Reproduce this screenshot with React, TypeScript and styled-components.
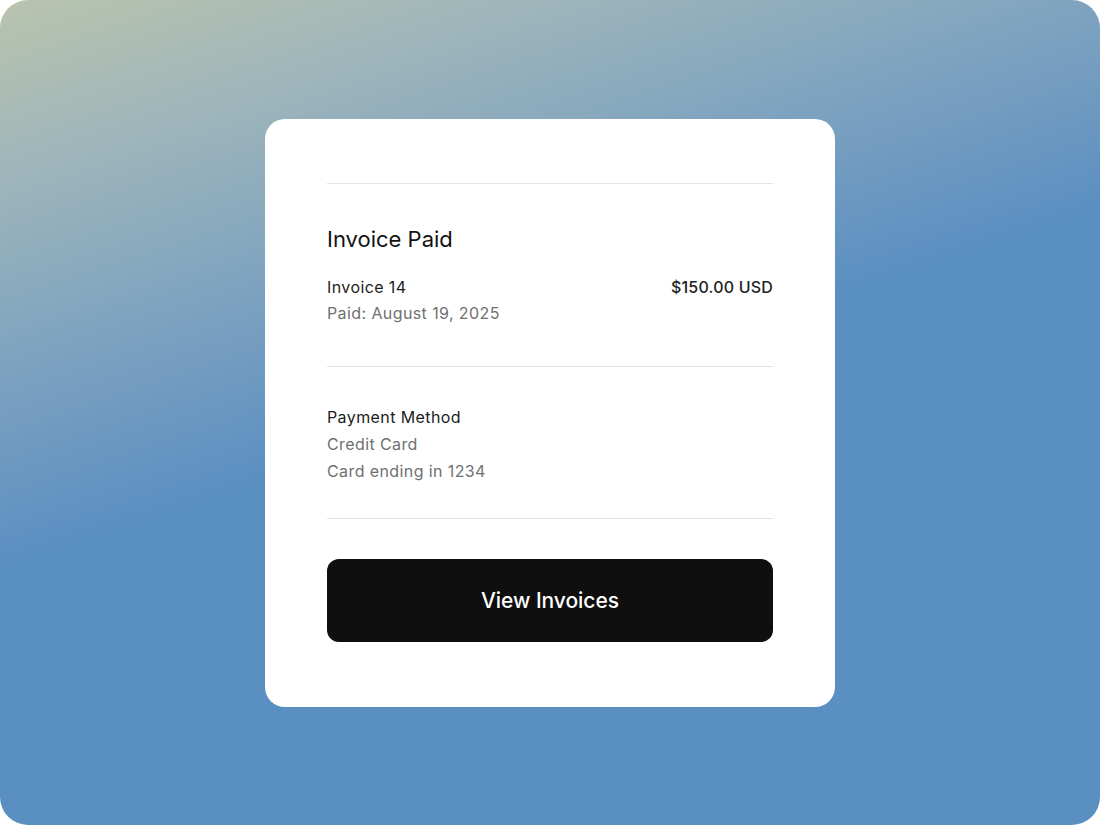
import React from "react";
import styled, { createGlobalStyle } from "styled-components";

const Global = createGlobalStyle`
  html, body { margin: 0; padding: 0; background: #ffffff; }
  * { box-sizing: border-box; }
  body { font-family: Inter, "Noto Sans", Arial, sans-serif; -webkit-font-smoothing: antialiased; }
`;

const Frame = styled.div`
  width: 1100px;
  height: 825px;
  border-radius: 28px;
  overflow: hidden;
  background: linear-gradient(162deg, #bac4ae 0%, #9cb4bb 16%, #789fc0 34%, #5a8fc2 48%, #5a8fc2 100%);
  display: flex;
  align-items: flex-start;
  justify-content: center;
  padding-top: 119px;
`;

const Card = styled.div`
  width: 570px;
  height: 588px;
  background: #ffffff;
  border-radius: 20px;
  padding: 64px 62px 65px;
  display: flex;
  flex-direction: column;
`;

const Divider = styled.div`
  height: 1px;
  background: #e4e4e4;
`;

const Section = styled.div<{ $top: number; $bottom: number }>`
  padding-top: ${(p) => p.$top}px;
  padding-bottom: ${(p) => p.$bottom}px;
  display: flex;
  flex-direction: column;
`;

const Title = styled.h2`
  margin: 0 0 21px;
  font-size: 22px;
  line-height: 28px;
  font-weight: 400;
  color: #121212;
  letter-spacing: 0;
`;

const Row = styled.div`
  display: flex;
  justify-content: space-between;
  align-items: flex-start;
`;

const Col = styled.div`
  display: flex;
  flex-direction: column;
`;

const Line = styled.span<{ $muted?: boolean; $lh?: number }>`
  font-size: 16px;
  line-height: ${(p) => p.$lh ?? 26}px;
  color: ${(p) => (p.$muted ? "#707070" : "#1c1c1c")};
  font-weight: 400;
  letter-spacing: 0.4px;
`;

const Amount = styled.span`
  font-size: 16px;
  line-height: 26px;
  font-weight: 500;
  color: #222222;
  letter-spacing: 0.2px;
`;

const Button = styled.button`
  margin-top: 40px;
  height: 83px;
  width: 100%;
  border: none;
  border-radius: 12px;
  background: #0f0f0f;
  color: #ffffff;
  font-family: Inter, "Noto Sans", Arial, sans-serif;
  font-size: 21px;
  font-weight: 500;
  letter-spacing: -0.05px;
  cursor: pointer;
`;

export default function App() {
  return (
    <>
      <Global />
      <Frame>
        <Card>
          <Divider />
          <Section $top={41} $bottom={40}>
            <Title>Invoice Paid</Title>
            <Row>
              <Col>
                <Line>Invoice 14</Line>
                <Line $muted>Paid: August 19, 2025</Line>
              </Col>
              <Amount>$150.00 USD</Amount>
            </Row>
          </Section>
          <Divider />
          <Section $top={37} $bottom={33}>
            <Line $lh={27}>Payment Method</Line>
            <Line $lh={27} $muted>Credit Card</Line>
            <Line $lh={27} $muted>Card ending in 1234</Line>
          </Section>
          <Divider />
          <Button>View Invoices</Button>
        </Card>
      </Frame>
    </>
  );
}
